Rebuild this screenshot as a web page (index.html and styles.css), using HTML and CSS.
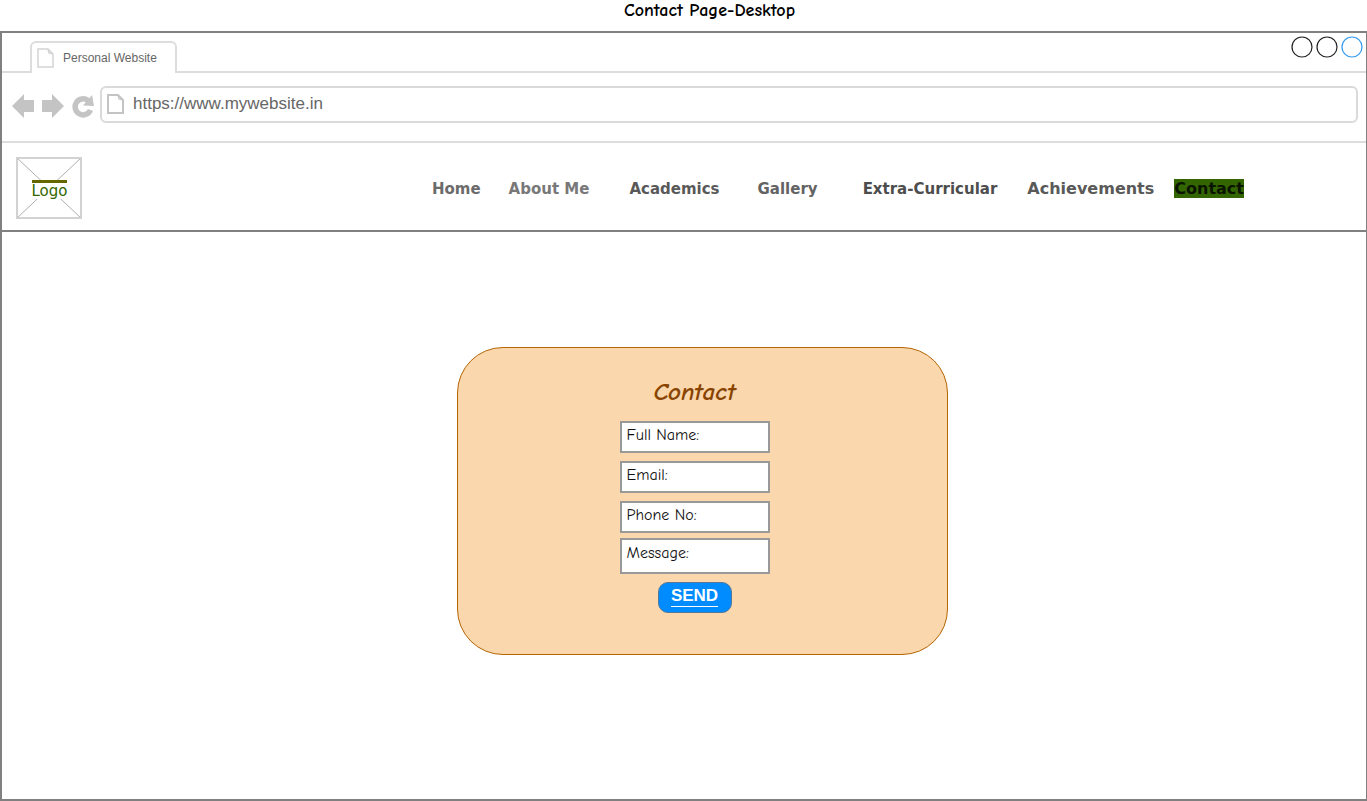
FILE: index.html
```html
<!DOCTYPE html>
<html lang="en">
<head>
<meta charset="utf-8">
<title>Contact Page-Desktop</title>
<link rel="stylesheet" href="styles.css">
</head>
<body>
<h1 class="page-title">Contact Page-Desktop</h1>
<div class="browser">
  <div class="tab-bar">
    <div class="tab">
      <svg width="17" height="20" viewBox="0 0 17 20" fill="none" stroke="#d4d4d4" stroke-width="1.5"><path d="M1 1H11L16 6V19H1ZM11 1L12 5L16 6"/></svg>
      <span>Personal Website</span>
    </div>
    <svg class="window-dots" width="72" height="22" viewBox="0 0 72 22" fill="none" stroke="#222" stroke-width="1.2"><circle cx="11" cy="11" r="10"/><circle cx="36" cy="11" r="10"/><circle cx="61" cy="11" r="10" stroke="#3399ee"/></svg>
  </div>
  <div class="toolbar">
    <button class="tool" type="button" aria-label="Back"><svg width="22" height="24" viewBox="0 0 22 24" fill="#c4c4c4"><path d="M0 12L12 0V6H22V18H12V24Z"/></svg></button>
    <button class="tool" type="button" aria-label="Forward"><svg width="22" height="24" viewBox="0 0 22 24" fill="#c4c4c4"><path d="M22 12L10 0V6H0V18H10V24Z"/></svg></button>
    <button class="tool" type="button" aria-label="Reload"><svg width="22" height="24" viewBox="0 0 22 24"><path d="M16 6.500A8 8 0 1 0 18.500 16" fill="none" stroke="#c4c4c4" stroke-width="5.500"/><path d="M20 1L22 12L11 11.500Z" fill="#c4c4c4"/></svg></button>
    <label class="address">
      <svg width="17" height="20" viewBox="0 0 17 20" fill="none" stroke="#c4c4c4" stroke-width="2"><path d="M1 1H11L16 6V19H1Z"/><path d="M11 1L12 5L16 6" stroke-width="1.2"/></svg>
      <input type="text" value="https://www.mywebsite.in" aria-label="Address">
    </label>
  </div>
  <header class="site-header">
    <a class="logo" href="#">
      <svg class="logo-frame" width="66" height="62" viewBox="0 0 66 62" fill="none"><path d="M1 1L65 61M65 1L1 61" stroke="#999" stroke-width=".8"/><path d="M1 1H65V61H1Z" stroke="#d2d2d2" stroke-width="2"/></svg>
      <span class="logo-text">Logo</span>
    </a>
    <nav class="nav">
      <a class="home" href="#">Home</a>
      <a class="about" href="#">About Me</a>
      <a class="academics" href="#">Academics</a>
      <a class="gallery" href="#">Gallery</a>
      <a class="extra" href="#">Extra-Curricular</a>
      <a class="achievements" href="#">Achievements</a>
      <a class="current" href="#" aria-current="page">Contact</a>
    </nav>
  </header>
  <main class="content">
    <form class="card">
      <h2>Contact</h2>
      <div class="field"><label for="name">Full Name:</label><input id="name" type="text"></div>
      <div class="field"><label for="email">Email:</label><input id="email" type="email"></div>
      <div class="field phone"><label for="phone">Phone No:</label><input id="phone" type="tel"></div>
      <div class="field message"><label for="message">Message:</label><input id="message" type="text"></div>
      <button class="send" type="button"><span>SEND</span></button>
    </form>
  </main>
</div>
</body>
</html>
```
FILE: styles.css
```css
* {
  box-sizing: border-box;
}

body {
  margin: 0;
  min-height: 100vh;
  display: flex;
  flex-direction: column;
  background: #fff;
  font-family: "Liberation Sans", Arial, sans-serif;
}

a {
  color: inherit;
  text-decoration: none;
}

svg {
  display: block;
  flex: none;
}

input {
  flex: 1;
  min-width: 0;
  padding: 0;
  border: 0;
  outline: 0;
  background: transparent;
  font: inherit;
  color: inherit;
}

.page-title {
  margin: 0 0 0 52px;
  height: 31px;
  font: 900 18px/22px "Comic Sans MS", "Comic Neue", Lato, sans-serif;
  text-align: center;
  color: #000;
}

.browser {
  flex: 1;
  display: flex;
  flex-direction: column;
  border: 2px solid #808080;
  border-right-width: 1px;
}

.tab-bar {
  display: flex;
  justify-content: space-between;
  align-items: flex-start;
  height: 40px;
  padding: 3px 3px 0 28px;
  border-bottom: 2px solid #ddd;
}

.tab {
  display: flex;
  align-items: center;
  gap: 9px;
  width: 147px;
  height: 32px;
  margin-top: 5px;
  padding-left: 5px;
  border: 2px solid #ddd;
  border-bottom: 0;
  border-radius: 6px 6px 0 0;
  background: #fff;
  font-size: 12px;
  color: #666;
}

.toolbar {
  display: flex;
  align-items: center;
  gap: 8px;
  height: 70px;
  padding: 0 8px 6px 10px;
  border-bottom: 2px solid #ddd;
}

.tool {
  padding: 4px 0 0;
  border: 0;
  background: none;
}

.address {
  flex: 1;
  display: flex;
  align-items: center;
  gap: 9px;
  height: 37px;
  margin-left: -2px;
  padding-left: 5px;
  border: 2px solid #dadada;
  border-radius: 6px;
  font-size: 17px;
  color: #666;
}

.site-header {
  display: flex;
  align-items: center;
  justify-content: space-between;
  height: 89px;
  padding: 2px 122px 0 14px;
  border-bottom: 2px solid #808080;
}

.logo {
  display: grid;
  place-items: center;
}

.logo > * {
  grid-area: 1 / 1;
}

.logo-text {
  margin: 3px 0 0 1px;
  border-top: 3px solid #660;
  background: #fff;
  font: 15px/16px "DejaVu Sans", Verdana, sans-serif;
  color: #360;
}

.nav {
  display: flex;
  align-items: baseline;
  padding-top: 2px;
  font: bold 15px "DejaVu Sans", Verdana, sans-serif;
  color: #595959;
}

.home {
  margin-right: 28px;
  color: #6b6b6b;
}

.about {
  margin-right: 40px;
  color: #787878;
}

.academics {
  margin-right: 38px;
}

.gallery {
  margin-right: 45px;
  color: #636363;
}

.extra {
  margin-right: 30px;
  color: #4d4d4d;
}

.achievements {
  margin-right: 20px;
  font-size: 16px;
}

.current {
  background: #360;
  font-size: 16px;
  color: #0a1400;
}

.content {
  flex: 1;
  display: flex;
  justify-content: center;
  align-items: flex-start;
  padding: 115px 0 0 37px;
}

.card {
  display: flex;
  flex-direction: column;
  align-items: center;
  width: 491px;
  padding: 28px 16px 41px 0;
  border: 1px solid #b46504;
  border-radius: 46px;
  background: #fad7ac;
  font-family: "Comic Sans MS", "Comic Neue", Lato, sans-serif;
}

.card h2 {
  margin: 0 0 13px;
  font-size: 25px;
  line-height: 32px;
  font-style: italic;
  font-weight: 900;
  color: #840;
}

.field {
  display: flex;
  align-items: flex-start;
  gap: 4px;
  width: 150px;
  height: 32px;
  margin-bottom: 8px;
  padding: 2px 5px;
  border: 2px solid #999;
  background: #fff;
  font-size: 16px;
  line-height: 20px;
  color: #111;
}

.phone {
  margin-bottom: 5px;
}

.message {
  height: 36px;
  margin-bottom: 8px;
  padding-top: 3px;
}

.send {
  width: 74px;
  height: 31px;
  padding: 0 0 3px;
  border: 1px solid #56789a;
  border-radius: 10px;
  background: #008cff;
  font: bold 17px/20px "Liberation Sans", Arial, sans-serif;
  color: #fff;
}

.send span {
  display: inline-block;
  border-bottom: 1px solid #fff;
}
```
